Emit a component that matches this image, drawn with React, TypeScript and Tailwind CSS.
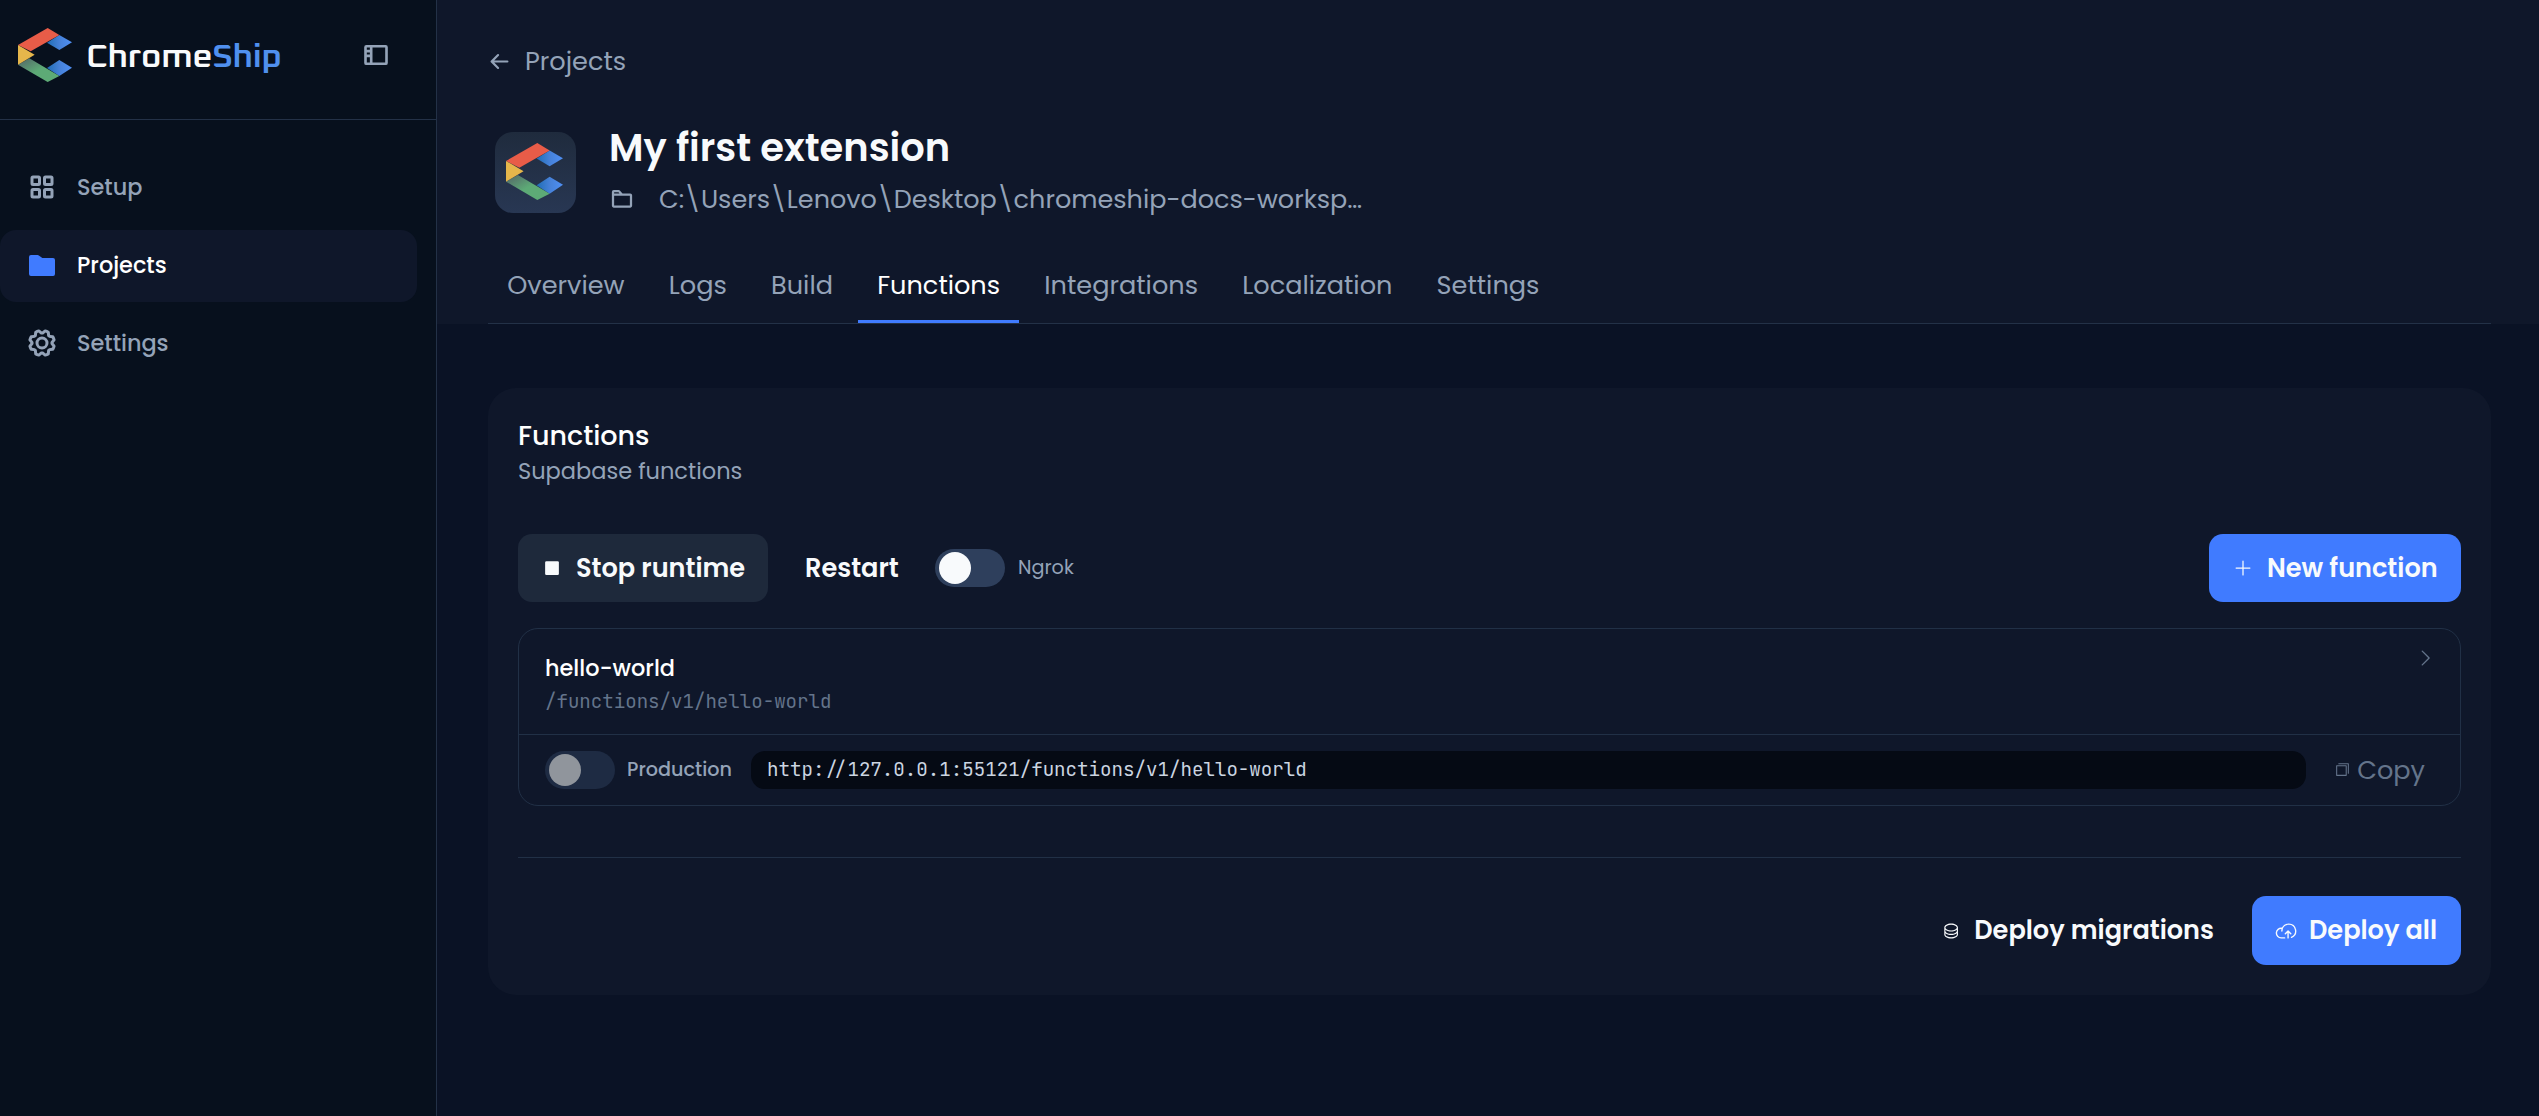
import type { ReactNode } from 'react'
import {
  PiArrowLeftBold,
  PiCaretRight,
  PiCloudArrowUp,
  PiCopySimple,
  PiDatabase,
  PiFolderBold,
  PiFolderSimpleFill,
  PiGearBold,
  PiPlus,
  PiSidebarBold,
  PiSquaresFourBold,
  PiStopFill,
} from 'react-icons/pi'
import { clsx } from 'clsx'

const NAV = [
  { label: 'Setup', icon: PiSquaresFourBold },
  { label: 'Projects', icon: PiFolderSimpleFill, active: true },
  { label: 'Settings', icon: PiGearBold },
]

const TABS = [
  { label: 'Overview' },
  { label: 'Logs' },
  { label: 'Build' },
  { label: 'Functions', active: true },
  { label: 'Integrations' },
  { label: 'Localization' },
  { label: 'Settings' },
]

function LogoMark({ className }: { className?: string }) {
  return (
    <svg viewBox="54 84 162 162" className={className} aria-hidden="true">
      <defs>
        <linearGradient id="mark-blue" x1="0" x2="1">
          <stop offset="0" stopColor="#1f6db5" />
          <stop offset="0.5" stopColor="#4681d8" />
          <stop offset="1" stopColor="#4f90f5" />
        </linearGradient>
        <linearGradient id="mark-green" x1="0" x2="1" y1="0" y2="1">
          <stop offset="0.1" stopColor="#55706a" />
          <stop offset="0.5" stopColor="#5daa76" />
        </linearGradient>
      </defs>
      <path d="M178 105 216 127 178 150 141 128Z" fill="url(#mark-blue)" />
      <path d="M178 180 216 203 178 228 141 204Z" fill="url(#mark-blue)" />
      <path d="M54 135 143 84 178 105 92 154Z" fill="#e85c48" />
      <path d="M54 194 88 175 178 228 143 246Z" fill="url(#mark-green)" />
      <path d="M54 135 104 164 54 194Z" fill="#e5b64b" />
    </svg>
  )
}

function Toggle({ disabled = false }: { disabled?: boolean }) {
  return (
    <span
      className={clsx(
        'flex h-[38px] w-[70px] shrink-0 items-center rounded-full px-1',
        disabled ? 'bg-[#1e2b43]' : 'bg-[#2e3f5c]'
      )}
    >
      <span className={clsx('size-8 rounded-full', disabled ? 'bg-[#90959c]' : 'bg-[#f8fafc]')} />
    </span>
  )
}

function Button({ className, children }: { className?: string; children: ReactNode }) {
  return (
    <button
      type="button"
      className={clsx(
        'flex shrink-0 items-center rounded-[14px] text-[25.6px] font-semibold whitespace-nowrap text-[#f8fafc]',
        className
      )}
    >
      {children}
    </button>
  )
}

function Sidebar() {
  return (
    <aside className="flex w-[437px] shrink-0 flex-col border-r border-[#233147] bg-[#07101d]">
      <div className="flex h-[120px] items-start border-b border-[#233147] pt-7 pl-[18px]">
        <LogoMark className="size-[54px]" />
        <span className="mr-[4px] ml-[14px] w-[272px] origin-left scale-x-109 font-[Oxanium,Poppins,sans-serif] text-[32.5px] leading-[59px] font-semibold tracking-[-0.6px] text-[#f8fafc]">
          Chrome<span className="text-[#5090ee]">Ship</span>
        </span>
        <PiSidebarBold className="mt-[13px] size-[28px] text-[#94a3b8]" />
      </div>
      <nav className="mt-8 flex flex-col gap-1.5 pr-[19px]">
        {NAV.map(({ label, icon: Icon, active }) => (
          <a
            key={label}
            href="#"
            className={clsx(
              'flex h-[72px] items-center gap-[19px] rounded-2xl pl-[26px] text-[22.4px] font-medium',
              active ? 'bg-[#0f172a] text-white' : 'text-[#94a3b8]'
            )}
          >
            <Icon className={clsx('-mt-0.5 size-8', active && 'text-[#407bff]')} />
            {label}
          </a>
        ))}
      </nav>
    </aside>
  )
}

function ProjectHeader() {
  return (
    <header className="h-[324px] bg-[#0f172a] pr-12 pl-[51px]">
      <a href="#" className="flex h-[122px] items-center gap-3.5 text-[25.6px] text-[#94a3b8]">
        <PiArrowLeftBold className="size-[23px]" />
        Projects
      </a>
      <div className="flex h-[122px] pt-[10px] pl-[7px]">
        <div className="flex size-[81px] items-center justify-center rounded-[18px] bg-linear-to-b from-[#1f2b3d] to-[#283753]">
          <LogoMark className="-mt-0.5 -ml-0.5 size-[57px]" />
        </div>
        <div className="-mt-[11px] ml-[33px]">
          <h1 className="text-[38.4px] leading-[54px] font-semibold text-[#f8fafc]">My first extension</h1>
          <p className="mt-px flex h-[46px] items-center text-[25.5px] text-[#94a3b8]">
            <PiFolderBold className="mr-[25px] ml-px size-6" />
            C:\Users\Lenovo\Desktop\chromeship-docs-worksp…
          </p>
        </div>
      </div>
      <nav className="flex h-[80px] gap-[5.8px] border-b border-[#233147]">
        {TABS.map(({ label, active }) => (
          <a
            key={label}
            href="#"
            className={clsx(
              'flex h-[79px] border-b-3 px-[19.2px] pt-[22px] text-[25.6px]',
              active ? 'border-[#407bff] text-white' : 'border-transparent text-[#94a3b8]'
            )}
          >
            {label}
          </a>
        ))}
      </nav>
    </header>
  )
}

function FunctionRow() {
  return (
    <div className="mt-[26px] h-[178px] rounded-[20px] border border-[#213046]">
      <div className="flex h-[106px] justify-between border-b border-[#213046] pr-[24px] pl-[26px]">
        <div className="pt-[22px]">
          <p className="text-[22.4px] leading-[34px] font-medium text-white">hello-world</p>
          <p className="font-['JetBrains_Mono','DejaVu_Sans_Mono',monospace] text-[19.1px] leading-[33px] text-[#64748b]">
            /functions/v1/hello-world
          </p>
        </div>
        <PiCaretRight className="mt-[18px] size-[22px] text-[#64748b]" />
      </div>
      <div className="flex h-[70px] items-center pr-[35px] pl-[26px]">
        <Toggle disabled />
        <span className="ml-3 w-[124px] text-[19.2px] font-medium text-[#94a3b8]">Production</span>
        <code className="h-[38px] flex-1 rounded-[14px] bg-[#050a14] px-4 font-['JetBrains_Mono','DejaVu_Sans_Mono',monospace] text-[19.15px] leading-[37px] text-[#cbd5e1]">
          http://127.0.0.1:55121/functions/v1/hello-world
        </code>
        <button type="button" className="ml-[28px] flex items-center gap-[6px] text-[25.6px] text-[#64748b]">
          <PiCopySimple className="size-[17px]" />
          Copy
        </button>
      </div>
    </div>
  )
}

function FunctionsCard() {
  return (
    <section className="mt-16 mr-12 ml-[51px] h-[607px] rounded-[28px] bg-[#0f172a] px-[30px]">
      <h2 className="pt-[29px] text-[27px] leading-[38px] font-medium text-white">Functions</h2>
      <p className="text-[22.5px] leading-[33px] text-[#94a3b8]">Supabase functions</p>

      <div className="mt-[46px] flex items-center">
        <Button className="h-[68px] w-[250px] bg-[#1e293b] pl-[24px]">
          <PiStopFill className="mr-[14px] size-[20px]" />
          Stop runtime
        </Button>
        <Button className="ml-[37px] h-[68px] w-[130px]">Restart</Button>
        <Toggle />
        <span className="ml-[13px] flex-1 text-[19.2px] text-[#94a3b8]">Ngrok</span>
        <Button className="h-[68px] w-[252px] bg-[#407bff] pl-[24px]">
          <PiPlus className="mr-[14px] size-[20px]" />
          New function
        </Button>
      </div>

      <FunctionRow />

      <div className="mt-[51px] flex justify-end border-t border-[#213046] pt-[38px]">
        <Button className="mr-[38px] h-[69px] w-[272px]">
          <PiDatabase className="mr-[14px] size-[22px]" />
          Deploy migrations
        </Button>
        <Button className="h-[69px] w-[209px] bg-[#407bff] pl-[23px]">
          <PiCloudArrowUp className="mr-[12px] size-[22px]" />
          Deploy all
        </Button>
      </div>
    </section>
  )
}

export default function App() {
  return (
    <div className="flex h-[1116px] w-full overflow-hidden bg-[#0a1225] font-[Poppins,Inter,sans-serif]">
      <Sidebar />
      <main className="min-w-0 flex-1">
        <ProjectHeader />
        <FunctionsCard />
      </main>
    </div>
  )
}
